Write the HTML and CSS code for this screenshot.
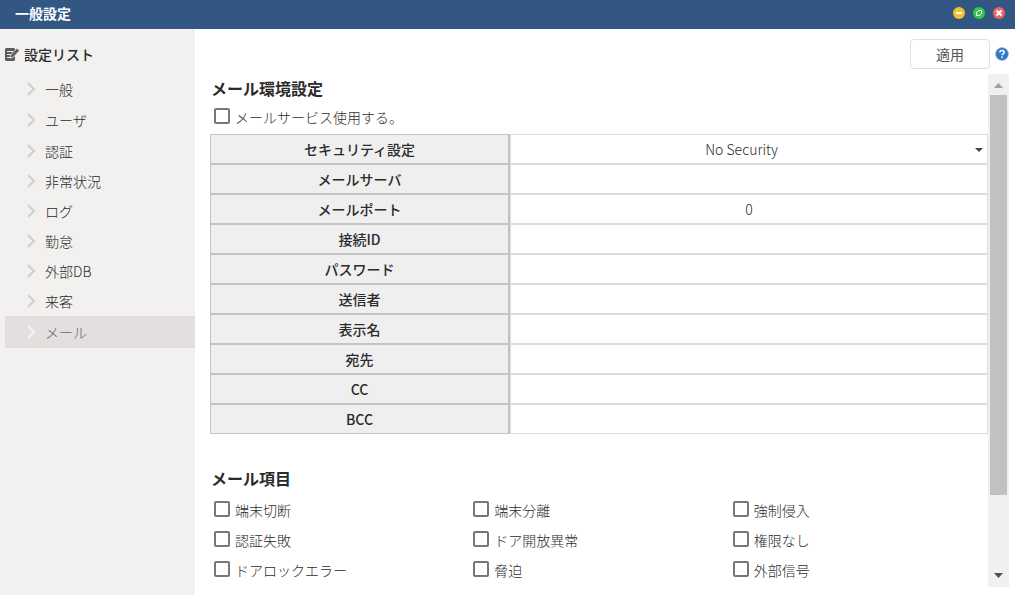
FILE: index.html
```html
<!DOCTYPE html>
<html lang="ja">
<head>
<meta charset="utf-8">
<title>一般設定</title>
<link rel="stylesheet" href="styles.css">
</head>
<body>
<div class="window">
  <header class="titlebar">
    <h1 class="title">一般設定</h1>
    <div class="window-buttons">
      <button class="win-btn minimize" aria-label="最小化"><svg viewBox="0 0 12 12"><path d="M3 6h6"/></svg></button>
      <button class="win-btn restore" aria-label="最大化"><svg viewBox="0 0 12 12"><path d="M5.500 3.500h3V6.500M3.500 5.500v3h3M3.500 5.500l2-2M6.500 8.500l2-2"/></svg></button>
      <button class="win-btn close" aria-label="閉じる"><svg viewBox="0 0 12 12"><path d="m3.500 3.500 5 5m0-5-5 5"/></svg></button>
    </div>
  </header>
  <div class="body">
    <nav class="sidebar">
      <h2 class="sidebar-title">
        <svg class="list-icon" viewBox="0 0 15 15"><path fill="#5c5c5e" d="M1 1h8l1 1v11l-1 1H1l-1-1V2z"/><path stroke="#f1f0ef" d="M2 4.500h6M2 7.500h4M2 10.500h3"/><path fill="#5c5c5e" stroke="#f1f0ef" stroke-width=".8" d="M12 1.200 14.500 3.700 8.500 10 5 11.200 6 7.500z"/></svg>
        設定リスト
      </h2>
      <ul class="menu">
        <li class="tall"><a href="#"><svg class="chevron" viewBox="0 0 10 14"><path d="m1 1 6 6-6 6"/></svg>一般</a></li>
        <li class="tall"><a href="#"><svg class="chevron" viewBox="0 0 10 14"><path d="m1 1 6 6-6 6"/></svg>ユーザ</a></li>
        <li class="tall"><a href="#"><svg class="chevron" viewBox="0 0 10 14"><path d="m1 1 6 6-6 6"/></svg>認証</a></li>
        <li><a href="#"><svg class="chevron" viewBox="0 0 10 14"><path d="m1 1 6 6-6 6"/></svg>非常状況</a></li>
        <li><a href="#"><svg class="chevron" viewBox="0 0 10 14"><path d="m1 1 6 6-6 6"/></svg>ログ</a></li>
        <li><a href="#"><svg class="chevron" viewBox="0 0 10 14"><path d="m1 1 6 6-6 6"/></svg>勤怠</a></li>
        <li><a href="#"><svg class="chevron" viewBox="0 0 10 14"><path d="m1 1 6 6-6 6"/></svg>外部DB</a></li>
        <li><a href="#"><svg class="chevron" viewBox="0 0 10 14"><path d="m1 1 6 6-6 6"/></svg>来客</a></li>
        <li class="selected"><a href="#" aria-current="page"><svg class="chevron" viewBox="0 0 10 14"><path d="m1 1 6 6-6 6"/></svg>メール</a></li>
      </ul>
    </nav>
    <main class="main">
      <div class="toolbar">
        <button class="apply">適用</button>
        <button class="help" aria-label="ヘルプ"><svg viewBox="0 0 14 14"><circle cx="7" cy="7" r="6.500" fill="#2f7ac6" stroke="#a9c4e0" stroke-width=".8"/><path d="M4.900 5.600C4.900 4.200 5.800 3.500 7 3.500s2.200.7 2.200 1.800c0 1.500-2.100 1.500-2.100 3" fill="none" stroke="#fff" stroke-width="1.600"/><path d="M6.200 9.400h1.700v1.500H6.200z" fill="#fff"/></svg></button>
      </div>
      <div class="scroll-area">
        <div class="content">
          <h2 class="section-title">メール環境設定</h2>
          <label class="check"><input type="checkbox">メールサービス使用する。</label>
          <table class="form">
            <tr><th><label for="security">セキュリティ設定</label></th><td><div class="select-box"><select id="security"><option>No Security</option></select></div></td></tr>
            <tr><th><label for="server">メールサーバ</label></th><td><input type="text" id="server"></td></tr>
            <tr><th><label for="port">メールポート</label></th><td><input type="text" id="port" value="0"></td></tr>
            <tr><th><label for="login">接続ID</label></th><td><input type="text" id="login"></td></tr>
            <tr><th><label for="password">パスワード</label></th><td><input type="password" id="password"></td></tr>
            <tr><th><label for="sender">送信者</label></th><td><input type="text" id="sender"></td></tr>
            <tr><th><label for="display">表示名</label></th><td><input type="text" id="display"></td></tr>
            <tr><th><label for="to">宛先</label></th><td><input type="text" id="to"></td></tr>
            <tr><th><label for="cc">CC</label></th><td><input type="text" id="cc"></td></tr>
            <tr><th><label for="bcc">BCC</label></th><td><input type="text" id="bcc"></td></tr>
          </table>
          <h2 class="section-title items-title">メール項目</h2>
          <div class="items">
            <label class="check"><input type="checkbox">端末切断</label>
            <label class="check"><input type="checkbox">端末分離</label>
            <label class="check"><input type="checkbox">強制侵入</label>
            <label class="check"><input type="checkbox">認証失敗</label>
            <label class="check"><input type="checkbox">ドア開放異常</label>
            <label class="check"><input type="checkbox">権限なし</label>
            <label class="check"><input type="checkbox">ドアロックエラー</label>
            <label class="check"><input type="checkbox">脅迫</label>
            <label class="check"><input type="checkbox">外部信号</label>
          </div>
        </div>
        <div class="scrollbar">
          <svg class="arrow" viewBox="0 0 9 5"><path fill="#a0a0a0" d="M0 5 4.500 0 9 5z"/></svg>
          <div class="track"><div class="thumb"></div></div>
          <svg class="arrow" viewBox="0 0 9 5"><path fill="#505050" d="M0 0h9L4.500 5z"/></svg>
        </div>
      </div>
    </main>
  </div>
</div>
</body>
</html>
```

FILE: styles.css
```css
* { box-sizing: border-box; }

body {
  margin: 0;
  color: #2b2b2b;
  font: 14px/20px "Noto Sans CJK KR", "Noto Sans CJK JP", sans-serif;
}

h1, h2, ul { margin: 0; padding: 0; }
button, input, select { font: inherit; color: inherit; }
button { padding: 0; cursor: pointer; }
svg { display: block; }

.window { display: flex; flex-direction: column; min-height: 100vh; background: #fff; }

.titlebar {
  display: flex;
  align-items: center;
  justify-content: space-between;
  height: 29px;
  padding: 0 10px 3px 15px;
  background: #325782;
}
.title { color: #fff; font-size: 14px; font-weight: 700; }
.window-buttons { display: flex; gap: 8px; }
.win-btn { width: 12px; height: 12px; border: 0; border-radius: 50%; }
.win-btn svg { width: 12px; height: 12px; fill: none; stroke: #fff; stroke-width: 2; }
.win-btn.restore svg { stroke-width: 1; }
.minimize { background: #f6c12f; }
.restore { background: #35c84a; }
.close { background: #f06464; }

.body { display: flex; flex: 1; }

.sidebar { flex: none; width: 195px; padding: 15px 0 0 5px; background: #f2f1ef; }
.sidebar-title {
  display: flex;
  align-items: center;
  gap: 4px;
  height: 20px;
  margin-bottom: 9px;
  font-size: 14px;
  font-weight: 500;
}
.list-icon { width: 15px; height: 15px; }
.menu { list-style: none; }
.menu a {
  display: flex;
  align-items: center;
  gap: 8px;
  height: 30px;
  padding-left: 22px;
  color: inherit;
  font-weight: 300;
  text-decoration: none;
}
.menu .tall a { height: 31px; }
.menu .selected a { height: 32px; color: #666; background: #e3dfde; }
.chevron { width: 10px; height: 14px; fill: none; stroke: #cfcfcf; stroke-width: 2; }
.selected .chevron { stroke: #f3f1f1; }

.main { display: flex; flex: 1; flex-direction: column; padding: 10px 6px 8px 15px; }
.toolbar { display: flex; align-items: center; justify-content: flex-end; gap: 5px; margin-bottom: 5px; }
.apply {
  width: 80px;
  height: 30px;
  border: 1px solid #dfdfdf;
  border-radius: 4px;
  background: #fff;
  color: #555;
}
.help { width: 14px; height: 14px; border: 0; background: none; }

.scroll-area { display: flex; flex: 1; }
.content { flex: 1; }
.section-title { height: 28px; padding-left: 1px; font-size: 16px; font-weight: 700; line-height: 28px; }
.check { display: flex; align-items: center; gap: 5px; height: 30px; padding-left: 4px; font-weight: 300; }
.check input {
  width: 16px;
  height: 16px;
  margin: 0 0 2px;
  border: 2px solid #777;
  border-radius: 2px;
  appearance: none;
  background: #fff;
}

.form { width: 100%; margin-top: 2px; border-collapse: separate; border-spacing: 0; table-layout: fixed; }
.form th, .form td { height: 30px; padding: 0; border: 1px solid #dcdcdc; }
.form th { width: 300px; border-color: #c3c3c3; border-right-width: 2px; background: #efefef; font-weight: 500; }
.form input, .form select {
  display: block;
  width: 100%;
  height: 28px;
  padding: 0;
  border: 0;
  outline: 0;
  background: none;
  font-weight: 300;
  text-align: center;
}
.form select { padding-right: 15px; appearance: none; text-align-last: center; }
.select-box { position: relative; }
.select-box::after {
  content: "";
  position: absolute;
  top: 13px;
  right: 4px;
  border: 4px solid transparent;
  border-top-color: #444;
  border-bottom: 0;
  pointer-events: none;
}

.items-title { margin: 30px 0 3px; }
.items { display: grid; grid-template-columns: repeat(3, 1fr); }

.scrollbar { display: flex; flex-direction: column; align-items: center; width: 21px; padding: 9px 2px; background: #f0f0f0; }
.arrow { width: 9px; height: 5px; }
.track { flex: 1; width: 17px; margin: 7px 0; }
.thumb { height: 85%; background: #c1c1c1; }
```
